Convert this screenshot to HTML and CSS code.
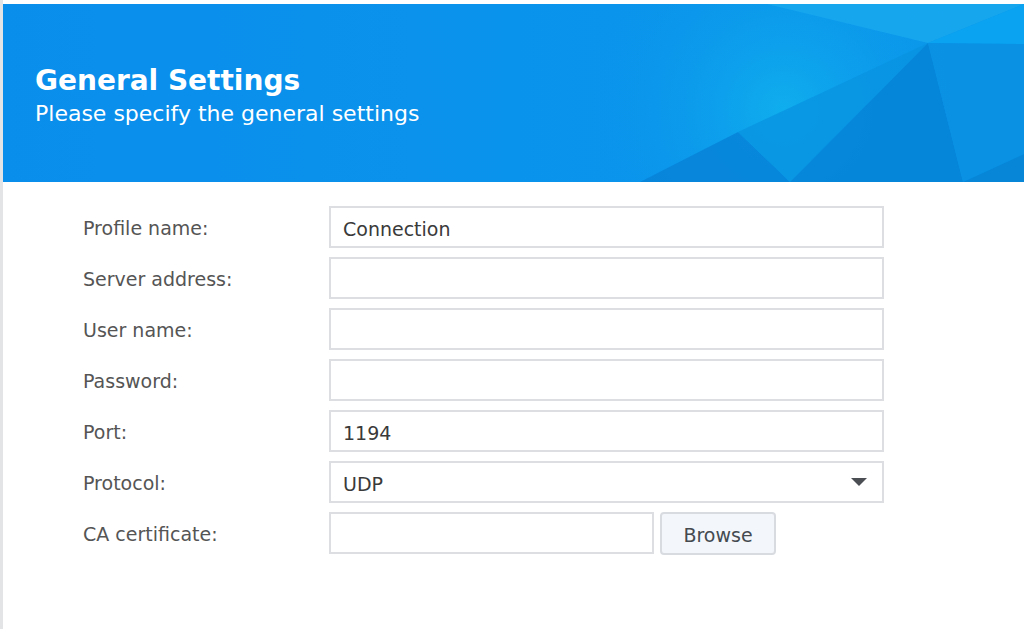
FILE: index.html
```html
<!DOCTYPE html>
<html>
<head>
<meta charset="utf-8">
<link rel="stylesheet" href="styles.css">
</head>
<body>
<div class="window">
  <header class="banner">
    <svg class="banner-art" viewBox="0 0 1021 178" preserveAspectRatio="none" aria-hidden="true">
      <defs>
        <radialGradient id="glow" cx="780" cy="105" r="200" gradientUnits="userSpaceOnUse">
          <stop offset="0" stop-color="#10b0ee" stop-opacity="0.9"/>
          <stop offset="1" stop-color="#0c94ea" stop-opacity="0"/>
        </radialGradient>
        <linearGradient id="base" x1="0" y1="0" x2="1" y2="0">
          <stop offset="0" stop-color="#0a8eec"/>
          <stop offset="0.6" stop-color="#0a94ec"/>
          <stop offset="1" stop-color="#0a98ea"/>
        </linearGradient>
      </defs>
      <rect x="0" y="0" width="1021" height="178" fill="url(#base)"/>
      <rect x="0" y="0" width="1021" height="178" fill="url(#glow)"/>
      <polygon points="764,0 925,39 1021,0" fill="#19a8ef" opacity="0.85"/>
      <polygon points="925,39 1021,0 1021,40" fill="#0aa4f2" opacity="0.9"/>
      <polygon points="637,178 735,128 787,178" fill="#0783d8" opacity="0.85"/>
      <polygon points="735,128 925,39 787,178" fill="#0893e0" opacity="0.75"/>
      <polygon points="787,178 925,39 960,178" fill="#0682d6" opacity="0.85"/>
      <polygon points="925,39 1021,40 1021,150 960,178" fill="#0a90e2" opacity="0.8"/>
      <polygon points="1021,150 960,178 1021,178" fill="#0786d8"/>
    </svg>
    <div class="banner-text">
      <h1 class="title">General Settings</h1>
      <p class="subtitle">Please specify the general settings</p>
    </div>
  </header>

  <form class="form">
    <div class="row">
      <label class="label">Profile name:</label>
      <div class="field"><span class="value">Connection</span></div>
    </div>
    <div class="row">
      <label class="label">Server address:</label>
      <div class="field"></div>
    </div>
    <div class="row">
      <label class="label">User name:</label>
      <div class="field"></div>
    </div>
    <div class="row">
      <label class="label">Password:</label>
      <div class="field"></div>
    </div>
    <div class="row">
      <label class="label">Port:</label>
      <div class="field"><span class="value">1194</span></div>
    </div>
    <div class="row">
      <label class="label">Protocol:</label>
      <div class="field select"><span class="value">UDP</span><span class="caret"></span></div>
    </div>
    <div class="row">
      <label class="label">CA certificate:</label>
      <div class="file-group">
        <div class="field file"></div>
        <button type="button" class="btn">Browse</button>
      </div>
    </div>
  </form>
</div>
</body>
</html>
```

FILE: styles.css
```css
html, body {
  margin: 0;
  padding: 0;
  background: #ffffff;
}

body {
  font-family: "DejaVu Sans", Verdana, sans-serif;
  width: 1024px;
  height: 629px;
  overflow: hidden;
}

.window {
  height: 629px;
  padding-top: 4px;
  box-sizing: border-box;
  border-left: 3px solid #e3e4e6;
}

.banner {
  position: relative;
  height: 178px;
  overflow: hidden;
  background: #0a90ec;
}

.banner-art {
  position: absolute;
  left: 0;
  top: 0;
  width: 100%;
  height: 100%;
}

.banner-text {
  position: relative;
  padding: 60px 0 0 32px;
  color: #ffffff;
}

.title {
  margin: 0;
  font-size: 28px;
  font-weight: bold;
  line-height: 34px;
}

.subtitle {
  margin: 3px 0 0;
  font-size: 22px;
  line-height: 26px;
}

.form {
  display: flex;
  flex-direction: column;
  gap: 9px;
  padding: 24px 0 0 80px;
}

.row {
  display: flex;
  align-items: center;
  height: 42px;
}

.label {
  width: 246px;
  font-size: 19px;
  color: #555555;
  padding-top: 1px;
}

.field {
  width: 555px;
  height: 42px;
  box-sizing: border-box;
  border: 2px solid #dcdee1;
  background: #fff;
  display: flex;
  align-items: center;
  padding-left: 12px;
}

.value {
  font-size: 19px;
  color: #3a3a3a;
  padding-top: 3px;
}

.select {
  justify-content: space-between;
  padding-right: 15px;
}

.caret {
  width: 0;
  height: 0;
  border-left: 8px solid transparent;
  border-right: 8px solid transparent;
  border-top: 8px solid #4b4f54;
}

.file-group {
  display: flex;
  gap: 6px;
}

.file {
  width: 325px;
}

.btn {
  width: 116px;
  height: 43px;
  box-sizing: border-box;
  border: 2px solid #d8dce1;
  border-radius: 4px;
  background: #f3f6fa;
  font-family: "DejaVu Sans", Verdana, sans-serif;
  font-size: 19px;
  color: #444a50;
  padding: 3px 0 0;
}
```
